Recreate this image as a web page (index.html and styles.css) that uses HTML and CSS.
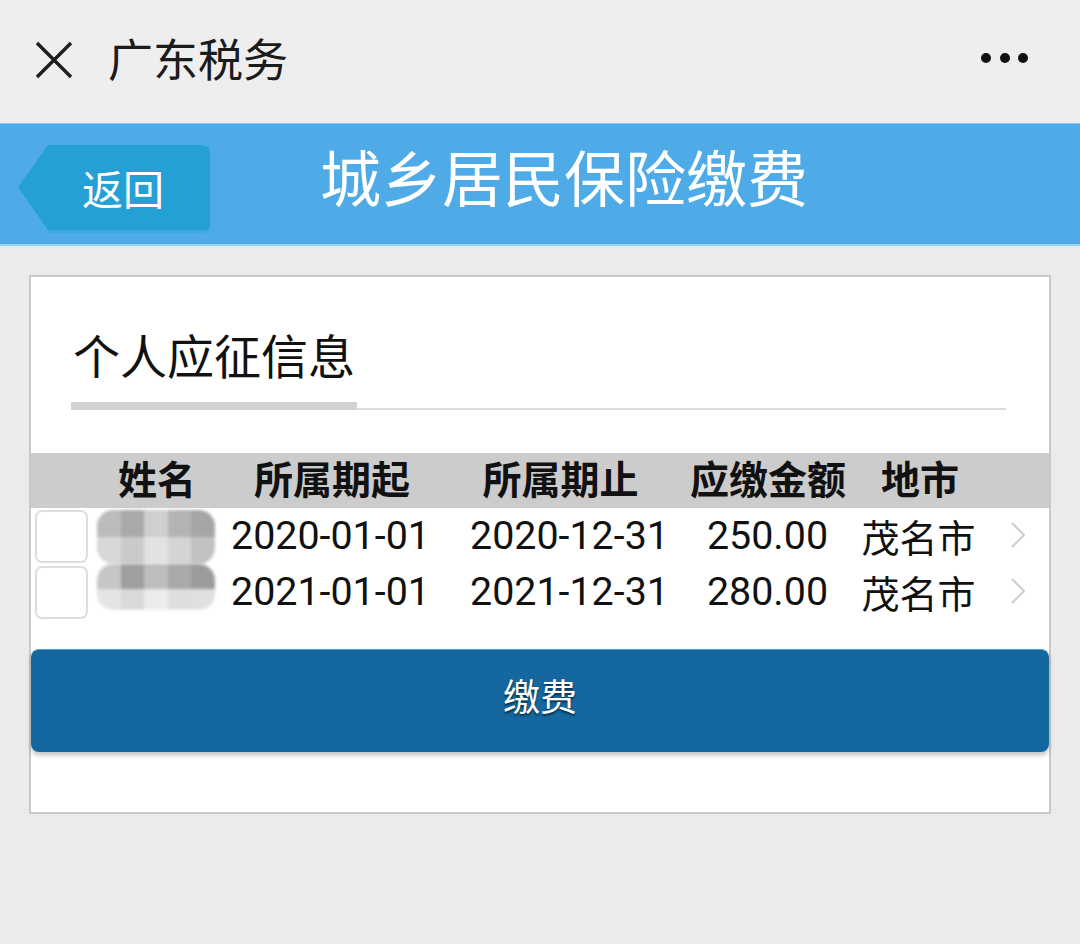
FILE: index.html
```html
<!DOCTYPE html>
<html lang="zh-CN">
<head>
  <meta charset="UTF-8" />
  <meta name="viewport" content="width=device-width, initial-scale=1.0"/>
  <title>城乡居民保险缴费</title>
  <link rel="stylesheet" href="styles.css">
</head>
<body>
  <!-- WeChat style top bar -->
  <div class="topbar">
    <svg class="close-icon" width="40" height="40" viewBox="0 0 40 40">
      <path d="M3 3 L37 37 M37 3 L3 37" stroke="#1e1e1e" stroke-width="3.4" fill="none"/>
    </svg>
    <span class="topbar-title">广东税务</span>
    <div class="more">
      <span></span><span></span><span></span>
    </div>
  </div>

  <div class="header">
    <a class="back-btn">返回</a>
    <h1>城乡居民保险缴费</h1>
  </div>

  <div class="main">
    <div class="card">
      <div class="section-title">
        <span>个人应征信息</span>
      </div>

      <div class="table-head">
        <span></span>
        <span>姓名</span>
        <span>所属期起</span>
        <span>所属期止</span>
        <span>应缴金额</span>
        <span>地市</span>
        <span></span>
      </div>

      <div class="row">
        <span class="check"></span>
        <span class="name"><i class="mosaic"></i></span>
        <span>2020-01-01</span>
        <span>2020-12-31</span>
        <span>250.00</span>
        <span class="city">茂名市</span>
        <svg class="chev" width="20" height="30" viewBox="0 0 20 30"><polyline points="4,3 16,15 4,27" fill="none" stroke="#cdcdcd" stroke-width="2"/></svg>
      </div>
      <div class="row">
        <span class="check"></span>
        <span class="name"><i class="mosaic mosaic-b"></i></span>
        <span>2021-01-01</span>
        <span>2021-12-31</span>
        <span>280.00</span>
        <span class="city">茂名市</span>
        <svg class="chev" width="20" height="30" viewBox="0 0 20 30"><polyline points="4,3 16,15 4,27" fill="none" stroke="#cdcdcd" stroke-width="2"/></svg>
      </div>

      <button class="pay-btn">缴费</button>
    </div>
  </div>
</body>
</html>
```

FILE: styles.css
```css
body {
  margin: 0;
  background-color: #ebebeb;
  font-family: "Noto Sans CJK SC", sans-serif;
  color: #111;
}

/* top bar */
.topbar {
  height: 123px;
  background-color: #eeeeee;
  display: flex;
  align-items: center;
  padding: 0 52px 0 34px;
  box-sizing: border-box;
}

.close-icon {
  margin-top: -4px;
}

.topbar-title {
  font-size: 45px;
  line-height: 1;
  margin-left: 34px;
  margin-top: -8px;
  color: #1b1b1b;
}

.more {
  margin-left: auto;
  display: flex;
  gap: 8.5px;
  margin-top: -7px;
}

.more span {
  width: 10px;
  height: 10px;
  border-radius: 50%;
  background-color: #111;
}

/* blue header */
.header {
  height: 123px;
  background-color: #4eabe7;
  border-top: 1px solid #8ccbf1;
  border-bottom: 2px solid #92d3f3;
  box-sizing: border-box;
  display: flex;
  align-items: center;
}

.back-btn {
  margin-left: 18px;
  margin-top: 10px;
  width: 192px;
  height: 88px;
  background-color: #25a0d5;
  clip-path: polygon(30px 0, 185px 0, 190px 2px, 192px 7px, 192px 81px, 190px 86px, 185px 88px, 32px 88px, 0 42px);
  box-shadow: inset 0 -3px 0 #3aa9dc;
  color: #fff;
  font-size: 41px;
  line-height: 84px;
  text-align: center;
  padding-left: 18px;
  box-sizing: border-box;
}

.header h1 {
  margin: -18px 0 0 110px;
  font-size: 61px;
  font-weight: 400;
  line-height: 1;
  color: #fff;
}

/* content card */
.main {
  padding: 29px 29px 0;
}

.card {
  background-color: #fff;
  border: 2px solid #c9c9c9;
  padding-bottom: 60px;
}

.section-title {
  margin: 0 43px 0 40px;
  padding-top: 53px;
  border-bottom: 2px solid #dcdcdc;
}

.section-title span {
  display: inline-block;
  font-size: 47px;
  line-height: 1;
  padding: 0 2px 25px;
  border-bottom: 8px solid #d2d2d2;
  margin-bottom: -2px;
  color: #111;
}

.table-head {
  margin-top: 43px;
  height: 55px;
  background-color: #cccccc;
  display: grid;
  grid-template-columns: 62px 128px 222px 235px 180px 124px 1fr;
  font-size: 39px;
  font-weight: 700;
  line-height: 48px;
  text-align: center;
}

.row {
  height: 56px;
  display: grid;
  grid-template-columns: 62px 129px 217px 261px 135px 167px 1fr;
  align-items: center;
  text-align: center;
  font-family: Roboto, "Noto Sans CJK SC", sans-serif;
  font-size: 39.4px;
  line-height: 54px;
  color: #111;
}

.row .city {
  font-family: "Noto Sans CJK SC", sans-serif;
  font-size: 38px;
}

.check {
  width: 53px;
  height: 53px;
  margin-left: 4px;
  box-sizing: border-box;
  border: 2px solid #dedede;
  border-radius: 7px;
}

.name {
  height: 56px;
  position: relative;
}

/* blurred name */
.mosaic {
  position: absolute;
  left: 4px;
  top: 2px;
  width: 118px;
  height: 54px;
  border-radius: 16px;
  filter: blur(1.5px);
  background:
    linear-gradient(90deg, #bcbcbc 0 20%, #a9a9a9 20% 40%, #cfcfcf 40% 60%, #b4b4b4 60% 80%, #a6a6a6 80%) top / 100% 50% no-repeat,
    linear-gradient(90deg, #d8d8d8 0 20%, #cacaca 20% 40%, #e2e2e2 40% 60%, #d4d4d4 60% 80%, #c2c2c2 80%) bottom / 100% 50% no-repeat;
}

.mosaic-b {
  top: 0;
  height: 46px;
  background:
    linear-gradient(90deg, #c6c6c6 0 20%, #9f9f9f 20% 40%, #bdbdbd 40% 60%, #a9a9a9 60% 80%, #9c9c9c 80%) top / 100% 55% no-repeat,
    linear-gradient(90deg, #e4e4e4 0 20%, #d9d9d9 20% 40%, #ececec 40% 60%, #dedede 60% 80%, #e0e0e0 80%) bottom / 100% 45% no-repeat;
}

.chev {
  margin-left: 6px;
  margin-top: -2px;
}

.pay-btn {
  display: block;
  width: 100%;
  height: 103px;
  margin-top: 29px;
  padding: 0 0 12px;
  border: none;
  border-top: 1px solid #4aa6c4;
  border-radius: 8px;
  background-color: #14679f;
  box-shadow: 0 3px 5px rgba(0, 0, 0, 0.25);
  color: #fff;
  font-family: "Noto Sans CJK SC", sans-serif;
  font-size: 37px;
  text-shadow: 0 2px 2px rgba(0, 0, 0, 0.55);
}
```
